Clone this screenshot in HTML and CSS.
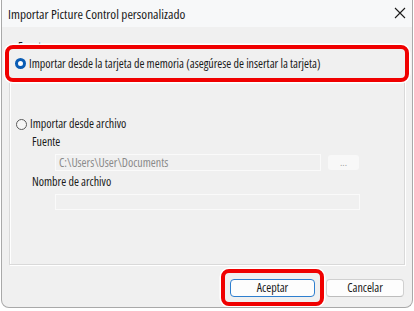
FILE: index.html
```html
<!DOCTYPE html>
<html lang="es">

<head>
  <meta charset="UTF-8">
  <meta name="viewport" content="width=device-width, initial-scale=1.0">
  <title>Importar Picture Control personalizado</title>
  <link rel="stylesheet" href="styles.css">
</head>

<body>
  <div class="dialog">
    <div class="titlebar">
      <span class="title">Importar Picture Control personalizado</span>
      <svg class="close" width="12" height="12" viewBox="0 0 12 12">
        <path d="M1 1 L11 11 M11 1 L1 11" stroke="#1b1b1b" stroke-width="1.1" fill="none" />
      </svg>
    </div>

    <div class="content">
      <div class="group">
        <span class="legend">Fuente</span>

        <label class="radio-row highlight">
          <span class="radio checked"></span>
          <span>Importar desde la tarjeta de memoria (asegúrese de insertar la tarjeta)</span>
        </label>

        <label class="radio-row second">
          <span class="radio"></span>
          <span>Importar desde archivo</span>
        </label>

        <div class="field-label">Fuente</div>
        <div class="field-row">
          <div class="input input-path">C:\Users\User\Documents</div>
          <button class="browse" disabled>...</button>
        </div>

        <div class="field-label">Nombre de archivo</div>
        <div class="field-row">
          <div class="input input-name"></div>
        </div>
      </div>

      <div class="buttons">
        <span class="btn-mark">
          <button class="btn btn-default">Aceptar</button>
        </span>
        <button class="btn">Cancelar</button>
      </div>
    </div>
  </div>
</body>

</html>
```

FILE: styles.css
```css
body {
  margin: 0;
  background-color: #fff;
  font-family: 'Open Sans', 'Noto Sans', sans-serif;
  font-stretch: 75%;
  font-size: 12px;
  color: #1a1a1a;
}

.dialog {
  margin-left: 1px;
  width: 412px;
  height: 308px;
  box-sizing: border-box;
  border: 1px solid #a9a9a9;
  border-top: 0;
  border-radius: 0 0 8px 8px;
  background-color: #f0f0f0;
  overflow: hidden;
}

.titlebar {
  height: 27px;
  background-color: #f7f8f9;
  display: flex;
  align-items: center;
  justify-content: space-between;
  padding: 0 5px 0 6px;
}

.title {
  font-size: 13.25px;
}

.close {
  margin-top: -1px;
  margin-right: 1px;
}

.content {
  padding: 19px 7px 0 7px;
}

.group {
  position: relative;
  height: 219px;
  box-sizing: border-box;
  border: 1px solid #d9d9d9;
  box-shadow: inset 1px 1px 0 #fff, 1px 1px 0 #fff;
}

.legend {
  position: absolute;
  top: -8px;
  left: 6px;
  padding: 0 2px;
  background-color: #f0f0f0;
  line-height: 16px;
}

.radio-row {
  display: flex;
  align-items: center;
  gap: 3px;
  line-height: 16px;
}

.highlight {
  position: relative;
  height: 37px;
  box-sizing: border-box;
  margin: -2px -5px 0 -5px;
  padding-left: 6px;
  background-color: #f0f0f0;
  border: 4px solid #f00000;
  border-radius: 8px;
  box-shadow: 0 0 0 1.5px #fff;
}

.second {
  margin-top: 34px;
  padding-left: 6px;
}

.radio {
  width: 11px;
  height: 11px;
  box-sizing: border-box;
  border-radius: 50%;
  border: 1px solid #5b5b5b;
  background-color: #f6f6f6;
}

.radio.checked {
  border: 3.5px solid #0a5cb4;
  background-color: #fff;
}

.field-label {
  margin: 2px 0 0 22px;
  line-height: 16px;
}

.field-row {
  display: flex;
  align-items: center;
  gap: 7px;
  margin: 4px 0 3px 45px;
}

.input {
  height: 17px;
  box-sizing: border-box;
  border: 1px solid #fafafa;
  background-color: #f0f0f0;
  color: #8a8a8a;
  padding-left: 3px;
  line-height: 15px;
}

.input-path {
  width: 266px;
}

.input-name {
  width: 305px;
  height: 16px;
}

.browse {
  width: 31px;
  height: 15px;
  border: 0;
  border-radius: 3px;
  background-color: #f8f8f8;
  color: #9a9a9a;
  font-family: 'Open Sans', sans-serif;
  font-size: 9px;
  line-height: 15px;
  padding: 0;
}

.buttons {
  display: flex;
  justify-content: flex-end;
  gap: 11px;
  margin-top: 14px;
  padding-right: 1px;
}

.btn {
  width: 78px;
  height: 18px;
  box-sizing: border-box;
  border: 1px solid #d0d0d0;
  border-bottom-color: #bdbdbd;
  border-radius: 4px;
  background-color: #fdfdfd;
  font-family: 'Open Sans', sans-serif;
  font-stretch: 75%;
  font-size: 12px;
  color: #1a1a1a;
  padding: 0;
  line-height: 16px;
}

.btn-mark {
  position: relative;
  display: flex;
}

.btn-mark::after {
  content: '';
  position: absolute;
  inset: -10px -9px -9px -9px;
  border: 4px solid #f00000;
  border-radius: 8px;
  box-shadow: 0 0 0 1.5px #fff;
}

.btn-default {
  width: 85px;
  border: 1px solid #2e7fcf;
}
```
